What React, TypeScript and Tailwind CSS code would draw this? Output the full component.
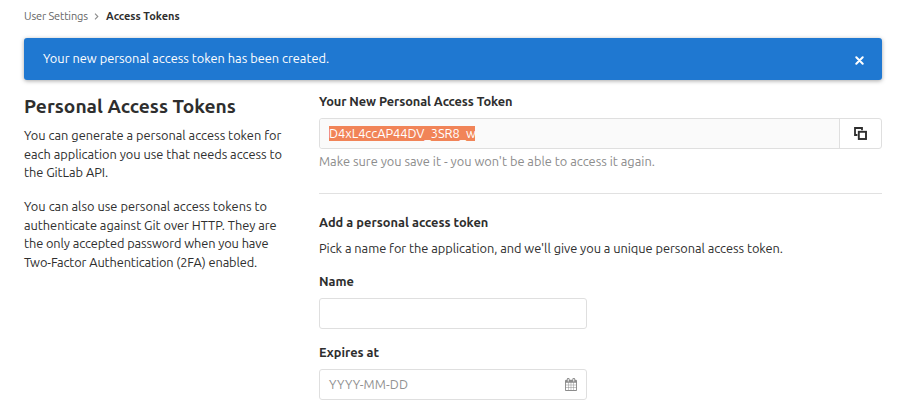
import React from "react";

const intro = [
  { text: "You can generate a personal access token for", fit: "tracking-normal" },
  { text: "each application you use that needs access to", fit: "tracking-[-0.03px]" },
  { text: "the GitLab API.", fit: "tracking-[-0.05px]" },
];

const details = [
  { text: "You can also use personal access tokens to", fit: "tracking-[0.02px]" },
  { text: "authenticate against Git over HTTP. They are", fit: "tracking-[-0.03px]" },
  { text: "the only accepted password when you have", fit: "tracking-[-0.1px]" },
  { text: "Two-Factor Authentication (2FA) enabled.", fit: "tracking-[-0.11px]" },
];

function Paragraph({ lines }: { lines: { text: string; fit: string }[] }) {
  return (
    <p className="whitespace-nowrap leading-[18.67px]">
      {lines.map((line) => (
        <span key={line.text} className={`block ${line.fit}`}>
          {line.text}
        </span>
      ))}
    </p>
  );
}

function CopyIcon() {
  return (
    <svg className="h-[13px] w-[13px]" viewBox="0 0 13 13" fill="none" stroke="#2e2e2e">
      <path d="M3.4 8H1V1h7v2.2" strokeWidth="1.8" />
      <rect x="4.8" y="4.8" width="7.2" height="7.2" strokeWidth="1.9" />
    </svg>
  );
}

function CalendarIcon() {
  return (
    <svg className="h-[13px] w-[12px]" viewBox="64 0 1664 1792" preserveAspectRatio="none" fill="#8c8c8c">
      <path d="M192 1664h288v-288h-288v288zM544 1664h320v-288h-320v288zM192 1312h288v-320h-288v320zM544 1312h320v-320h-320v320zM192 928h288v-288h-288v288zM928 1664h320v-288h-320v288zM544 928h320v-288h-320v288zM1312 1664h288v-288h-288v288zM928 1312h320v-320h-320v320zM576 448v-288q0-13-9.5-22.5t-22.5-9.5h-64q-13 0-22.5 9.5t-9.5 22.5v288q0 13 9.5 22.5t22.5 9.5h64q13 0 22.5-9.5t9.5-22.5zM1312 1312h288v-320h-288v320zM928 928h320v-288h-320v288zM1312 928h288v-288h-288v288zM1344 448v-288q0-13-9.5-22.5t-22.5-9.5h-64q-13 0-22.5 9.5t-9.5 22.5v288q0 13 9.5 22.5t22.5 9.5h64q13 0 22.5-9.5t9.5-22.5zM1728 384v1280q0 52-38 90t-90 38h-1408q-52 0-90-38t-38-90v-1280q0-52 38-90t90-38h128v-96q0-66 47-113t113-47h64q66 0 113 47t47 113v96h384v-96q0-66 47-113t113-47h64q66 0 113 47t47 113v96h128q52 0 90 38t38 90z" />
    </svg>
  );
}

export default function App() {
  return (
    <div className="h-[417px] overflow-hidden bg-white pr-[25px] pl-6 font-['Ubuntu','Noto_Sans',sans-serif] text-[12.8px] text-[#2e2e2e]">
      <nav className="flex h-[38px] items-center pb-[6px] text-[11px] leading-4 whitespace-nowrap">
        <span className="w-16 tracking-[-0.13px] text-[#666]">User Settings</span>
        <svg className="mr-[7px] ml-[6px] h-[7px] w-[5px]" viewBox="0 0 5 7" fill="none" stroke="#8c8c8c" strokeWidth="1.1">
          <path d="M1 .7 3.8 3.5 1 6.3" />
        </svg>
        <span className="font-bold">Access Tokens</span>
      </nav>

      <div className="flex h-[42px] items-center justify-between rounded-[3px] bg-[#1f78d1] pr-[18px] pl-[19px] text-white shadow-[0_1px_4px_rgba(0,0,0,0.35)]">
        <span className="mb-[2px] leading-5 whitespace-nowrap">Your new personal access token has been created.</span>
        <svg className="mt-[3px] h-[9px] w-[9px]" viewBox="0 0 9 9" stroke="white" strokeWidth="2" strokeLinecap="round">
          <path d="m1.3 1.3 6.4 6.4m0-6.4L1.3 7.7" />
        </svg>
      </div>

      <div className="grid grid-cols-[295px_563px]">
        <aside className="pt-[14px]">
          <h4 className="mb-2 text-[19.2px] leading-6 font-bold whitespace-nowrap">Personal Access Tokens</h4>
          <Paragraph lines={intro} />
          <div className="h-[15px]" />
          <Paragraph lines={details} />
        </aside>

        <main className="whitespace-nowrap">
          <h5 className="mt-[11px] h-[27px] leading-5 font-bold tracking-[-0.08px]">Your New Personal Access Token</h5>
          <div className="flex h-[31px] rounded-[3px] border border-[#dfdfdf]">
            <div className="flex flex-1 items-center rounded-l-[3px] bg-[#fafafa] pl-[9px]">
              <span className="h-[15px] w-[146px] bg-[#f18458] leading-[15px] tracking-[-0.02px] text-white">D4xL4ccAP44DV_3SR8_w</span>
            </div>
            <button className="flex w-[42px] items-center justify-center border-l border-[#dfdfdf]" aria-label="Copy token">
              <CopyIcon />
            </button>
          </div>
          <p className="mt-[2px] leading-5 text-[#8c8c8c]">Make sure you save it - you won't be able to access it again.</p>
          <hr className="mt-[22px] border-t border-[#e1e1e1]" />
          <h5 className="mt-[18px] leading-5 font-bold tracking-[0.02px]">Add a personal access token</h5>
          <p className="mt-[6px] leading-5 tracking-[-0.04px]">Pick a name for the application, and we'll give you a unique personal access token.</p>
          <label className="mt-[13px] block h-[27px] leading-5 font-bold">Name</label>
          <div className="h-[31px] w-[268px] rounded-[3px] border border-[#dfdfdf]" />
          <label className="mt-[13px] block h-[27px] leading-5 font-bold">Expires at</label>
          <div className="flex h-[31px] w-[268px] items-center justify-between rounded-[3px] border border-[#dfdfdf] px-[9px]">
            <span className="tracking-[0.08px] text-[#919191]">YYYY-MM-DD</span>
            <CalendarIcon />
          </div>
        </main>
      </div>
    </div>
  );
}
